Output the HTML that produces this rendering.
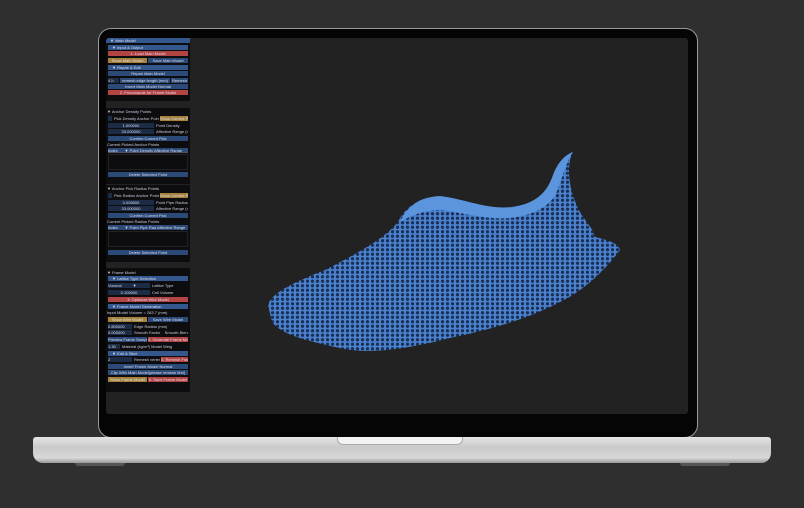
<!DOCTYPE html><html><head><meta charset="utf-8"><style>
*{margin:0;padding:0;box-sizing:border-box}
body{width:804px;height:508px;background:#2f2f2f;position:relative;overflow:hidden;font-family:"Liberation Sans",sans-serif}
.a{position:absolute}
.lid{left:98px;top:28px;width:600px;height:410px;border-radius:13px;background:#050505;border:1.5px solid #9a9a9a}
.scr{left:106px;top:38px;width:582px;height:376px;background:#222;border-radius:3px;overflow:hidden}
.win{position:absolute;left:0;width:84px;background:#0d0d10;overflow:hidden}
.r{position:absolute;height:5px;font-size:4px;line-height:5px;color:#dde;text-align:center;white-space:nowrap;overflow:hidden}
.h{background:#34578d;text-align:left;padding-left:4px}
.b{background:#2b4a77}.red{background:#b24444}.gold{background:#a5823c}
.f{background:#1c2c46;text-align:left}
.t{color:#ccd;text-align:left}
</style></head><body>
<div class="a lid"></div>
<div class="a scr">
<div class="win" style="top:0;height:63px">
<div class="r h" style="left:0;top:0;width:84px">▼ Main Model</div>
<div class="r h" style="left:2px;top:7px;width:80px">▼ Input &amp; Output</div>
<div class="r red" style="left:2px;top:13px;width:80px">1. Load Main Model</div>
<div class="r gold" style="left:2px;top:20px;width:39px">Show Main Model</div>
<div class="r b" style="left:42px;top:20px;width:40px">Save Main Model</div>
<div class="r h" style="left:2px;top:27px;width:80px">▼ Repair &amp; Edit</div>
<div class="r b" style="left:2px;top:33px;width:80px">Repair Main Model</div>
<div class="r f" style="left:2px;top:40px;width:11px">4 ▷</div>
<div class="r b" style="left:14px;top:40px;width:50px">remesh edge length (mm)</div>
<div class="r b" style="left:65px;top:40px;width:17px">Remesh</div>
<div class="r b" style="left:2px;top:46px;width:80px">Invert Main Model Normal</div>
<div class="r red" style="left:2px;top:52px;width:80px">2. Precompute for Frame Model</div>
</div>
<div class="win" style="top:70px;height:76px">
<div class="r t" style="left:1px;top:1px;width:80px">▼ Anchor Density Points</div>
<div class="r f" style="left:2px;top:8px;width:4px"></div>
<div class="r t" style="left:8px;top:8px;width:45px">Pick Density Anchor Points</div>
<div class="r gold" style="left:54px;top:8px;width:28px">Show Current Pi</div>
<div class="r f" style="left:2px;top:15px;width:46px;text-align:center">1.000000</div>
<div class="r t" style="left:50px;top:15px;width:32px">Point Density</div>
<div class="r f" style="left:2px;top:21px;width:46px;text-align:center">33.000000</div>
<div class="r t" style="left:50px;top:21px;width:32px">Affective Range (mm)</div>
<div class="r b" style="left:2px;top:28px;width:80px">Confirm Current Pick</div>
<div class="r t" style="left:1px;top:34px;width:80px">Current Picked Anchor Points</div>
<div class="r b" style="left:2px;top:40px;width:80px;text-align:left;border-bottom:1px solid #556">Index &nbsp;&nbsp;&nbsp;&nbsp;&nbsp;▼ Point Density Affective Range</div>
<div class="a" style="left:2px;top:46px;width:80px;height:16px;border:1px solid #222"></div>
<div class="r b" style="left:2px;top:64px;width:80px">Delete Selected Point</div>
</div>
<div class="win" style="top:147px;height:77px">
<div class="r t" style="left:1px;top:1px;width:80px">▼ Anchor Pick Radius Points</div>
<div class="r f" style="left:2px;top:8px;width:4px"></div>
<div class="r t" style="left:8px;top:8px;width:45px">Pick Radius Anchor Points</div>
<div class="r gold" style="left:54px;top:8px;width:28px">Show Current Pi</div>
<div class="r f" style="left:2px;top:15px;width:46px;text-align:center">0.006500</div>
<div class="r t" style="left:50px;top:15px;width:32px">Point Pipe Radius</div>
<div class="r f" style="left:2px;top:21px;width:46px;text-align:center">33.000000</div>
<div class="r t" style="left:50px;top:21px;width:32px">Affective Range (mm)</div>
<div class="r b" style="left:2px;top:28px;width:80px">Confirm Current Pick</div>
<div class="r t" style="left:1px;top:34px;width:80px">Current Picked Radius Points</div>
<div class="r b" style="left:2px;top:40px;width:80px;text-align:left">Index &nbsp;&nbsp;&nbsp;&nbsp;&nbsp;▼ Point Pipe Rad Affective Range</div>
<div class="a" style="left:2px;top:46px;width:80px;height:16px;border:1px solid #222"></div>
<div class="r b" style="left:2px;top:65px;width:80px">Delete Selected Point</div>
</div>
<div class="win" style="top:230px;height:124px">
<div class="r t" style="left:1px;top:2px;width:80px">▼ Frame Model</div>
<div class="r h" style="left:2px;top:8px;width:80px">▼ Lattice Type Selection</div>
<div class="r f" style="left:2px;top:15px;width:42px">Voronoi &nbsp;&nbsp;&nbsp;&nbsp;&nbsp;&nbsp;&nbsp;&nbsp;&nbsp;▼</div>
<div class="r t" style="left:46px;top:15px;width:36px">Lattice Type</div>
<div class="r f" style="left:2px;top:22px;width:42px;text-align:center">0.100000</div>
<div class="r t" style="left:46px;top:22px;width:36px">Cell Volume</div>
<div class="r red" style="left:2px;top:29px;width:80px">3. Optimize Wire Model</div>
<div class="r h" style="left:2px;top:36px;width:80px">▼ Frame Model Generation</div>
<div class="r t" style="left:1px;top:42px;width:80px">Input Model Volume = 283.7 (mm)</div>
<div class="r gold" style="left:2px;top:49px;width:39px">Show Wire Model</div>
<div class="r b" style="left:42px;top:49px;width:40px">Save Wire Model</div>
<div class="r f" style="left:2px;top:56px;width:24px">0.800000</div>
<div class="r t" style="left:28px;top:56px;width:54px">Edge Radius (mm)</div>
<div class="r f" style="left:2px;top:62px;width:24px">0.000000</div>
<div class="r t" style="left:28px;top:62px;width:54px">Smooth Factor &nbsp;&nbsp;&nbsp;Smooth Blend</div>
<div class="r b" style="left:2px;top:69px;width:39px">Preview Frame Sample</div>
<div class="r red" style="left:42px;top:69px;width:40px">4. Generate Frame Mo</div>
<div class="r f" style="left:2px;top:76px;width:12px">1.30</div>
<div class="r t" style="left:16px;top:76px;width:66px">Material (kg/m³) Model Weig</div>
<div class="r h" style="left:2px;top:83px;width:80px">▼ Edit &amp; Slice</div>
<div class="r f" style="left:2px;top:89px;width:24px">2</div>
<div class="r t" style="left:28px;top:89px;width:26px">Remesh vertex</div>
<div class="r red" style="left:55px;top:89px;width:27px">5. Remesh Frame</div>
<div class="r b" style="left:2px;top:96px;width:80px">Invert Frame Model Normal</div>
<div class="r b" style="left:2px;top:102px;width:80px">Clip With Main Model(please remesh first)</div>
<div class="r gold" style="left:2px;top:109px;width:39px">Show Frame Model</div>
<div class="r red" style="left:42px;top:109px;width:40px">6. Save Frame Model</div>
</div>
<svg class="a" style="left:0;top:0" width="582" height="376" viewBox="106 38 582 376">
<defs><pattern id="hx" width="5" height="4.5" patternUnits="userSpaceOnUse"><rect width="5" height="4.5" fill="#4a80cc"/><circle cx="2.5" cy="2.25" r="1.6" fill="#1a2f55"/></pattern></defs>
<path d="M268 305 C272 292 295 282 325 270 C360 252 385 238 398 222 C405 207 420 197 440 197 C465 200 485 212 510 210 C530 208 545 200 552 178 C558 162 565 155 573 152 C566 165 568 190 580 212 C590 228 596 232 593 236 C605 240 618 242 620 250 C605 270 585 290 560 302 C530 318 490 330 450 338 C410 348 370 356 335 347 C305 340 282 335 272 322 Z" fill="url(#hx)"/>
<path d="M400 222 C408 205 420 197 440 196 C465 199 488 210 512 207 C532 204 546 196 553 175 C558 162 565 155 573 152 C566 162 562 180 555 196 C545 210 528 216 510 218 C485 220 460 212 440 210 C425 210 412 215 400 222 Z" fill="#5b95de"/>
</svg>
</div>
<div class="a" style="left:33px;top:437px;width:738px;height:26px;border-radius:3px 3px 10px 10px;background:linear-gradient(#e4e4e4,#c9c9c9 40%,#d8d8d8 80%,#9a9a9a)"></div>
<div class="a" style="left:337px;top:437px;width:126px;height:8px;border-radius:0 0 6px 6px;background:#f2f2f2;border:1px solid #aaa;border-top:none"></div>
<div class="a" style="left:75px;top:463px;width:50px;height:3px;background:#555;border-radius:0 0 4px 4px"></div>
<div class="a" style="left:680px;top:463px;width:50px;height:3px;background:#555;border-radius:0 0 4px 4px"></div>
</body></html>
